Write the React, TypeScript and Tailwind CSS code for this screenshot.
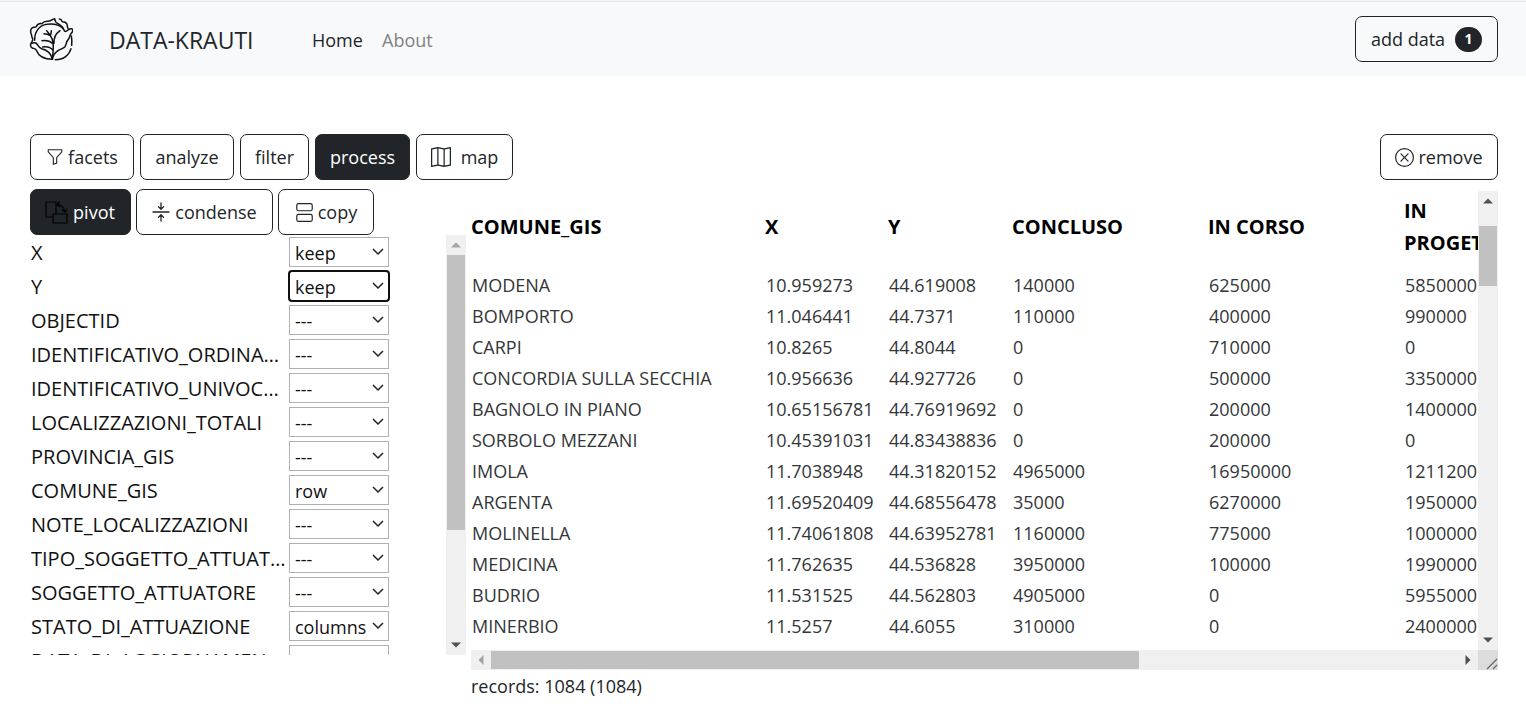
import React from "react";
import { BsFunnel, BsMap, BsXCircle, BsViewStacked } from "react-icons/bs";

const fields: [string, string][] = [
  ["X", "keep"],
  ["Y", "keep"],
  ["OBJECTID", "---"],
  ["IDENTIFICATIVO_ORDINANZA", "---"],
  ["IDENTIFICATIVO_UNIVOCO_ID", "---"],
  ["LOCALIZZAZIONI_TOTALI", "---"],
  ["PROVINCIA_GIS", "---"],
  ["COMUNE_GIS", "row"],
  ["NOTE_LOCALIZZAZIONI", "---"],
  ["TIPO_SOGGETTO_ATTUATORE", "---"],
  ["SOGGETTO_ATTUATORE", "---"],
  ["STATO_DI_ATTUAZIONE", "columns"],
  ["DATA_DI_AGGIORNAMENTO", "---"],
];

const columns = ["COMUNE_GIS", "X", "Y", "CONCLUSO", "IN CORSO", "IN PROGETTO"];

const rows = [
  ["MODENA", "10.959273", "44.619008", "140000", "625000", "5850000"],
  ["BOMPORTO", "11.046441", "44.7371", "110000", "400000", "990000"],
  ["CARPI", "10.8265", "44.8044", "0", "710000", "0"],
  ["CONCORDIA SULLA SECCHIA", "10.956636", "44.927726", "0", "500000", "3350000"],
  ["BAGNOLO IN PIANO", "10.65156781", "44.76919692", "0", "200000", "1400000"],
  ["SORBOLO MEZZANI", "10.45391031", "44.83438836", "0", "200000", "0"],
  ["IMOLA", "11.7038948", "44.31820152", "4965000", "16950000", "1211200"],
  ["ARGENTA", "11.69520409", "44.68556478", "35000", "6270000", "1950000"],
  ["MOLINELLA", "11.74061808", "44.63952781", "1160000", "775000", "1000000"],
  ["MEDICINA", "11.762635", "44.536828", "3950000", "100000", "1990000"],
  ["BUDRIO", "11.531525", "44.562803", "4905000", "0", "5955000"],
  ["MINERBIO", "11.5257", "44.6055", "310000", "0", "2400000"],
];

function Btn({ children, active = false, className = "" }: { children: React.ReactNode; active?: boolean; className?: string }) {
  const tone = active ? "bg-[#212529] text-white" : "text-[#212529]";
  return (
    <button
      type="button"
      className={`flex h-[46px] items-center justify-center gap-1 rounded-[7px] border border-[#212529] text-lg whitespace-nowrap ${tone} ${className}`}
    >
      {children}
    </button>
  );
}

function Logo() {
  return (
    <svg viewBox="87 51 132 132" className="size-11" fill="none" stroke="#111" strokeWidth="4.500" strokeLinecap="round" strokeLinejoin="round" role="img" aria-label="Cabbage">
      <path d="M164 57c-8 0-12 7-20 7-8-1-14 2-19 7-8-1-14 3-17 10-9 0-16 4-16 12-1 6 2 9 3 14 0 5 4 8 3 13l-4 10" />
      <path d="M104 121c-1-25 13-45 37-48 20-3 36 1 48 12" />
      <path d="M164 57c1 7 3 11 10 14 9 5 15 11 18 19 2 7 7 5 11 1 5-5 14-8 15 0 1 6-5 8-7 13-2 8-4 14-10 20" />
      <path d="M178 57c5 0 7 3 9 8 6 0 12 2 14 8 2 4 0 8 3 12" />
      <path d="M94 130c-4 4-3 11 3 14 5 2 9 1 12 7 6 16 22 27 48 27" />
      <path d="M94 130c6-2 13-3 17 2 4 6 5 11 14 14 16 4 29 14 32 32" />
      <path d="M214 108c2 9 2 18 1 28M213 146c-5 19-22 33-47 33" />
      <path d="M201 124c-3 6-2 10-6 16-5 6-13 7-21 12-10 7-16 16-17 26" />
      <path d="M157 178c3-22 6-46-1-62-4-9-9-17-16-24M132 101c7 0 13 2 19 6 2-5 3-9 3-15M126 122c11-2 23 0 33 9M128 141c12-2 24 1 31 10M162 130c-1-15 5-29 18-38" />
    </svg>
  );
}

function PivotIcon() {
  return (
    <svg viewBox="0 0 24 24" className="-ml-px size-6" fill="none" stroke="#000" strokeWidth="1.200" aria-hidden="true">
      <path d="M8 17H1V2h10v12M8 14h14v9H8z" />
      <path d="M12 4.500c4 0 7 2.500 8 7.500M14.500 2 12 4.500l3 2.500M17 9.500l3 2.500 2-3" />
    </svg>
  );
}

function CondenseIcon() {
  return (
    <svg viewBox="0 0 18 20" className="h-5 w-[18px]" fill="none" stroke="currentColor" strokeWidth="1.300" strokeLinecap="round" strokeLinejoin="round" aria-hidden="true">
      <path d="M1 10h16M9 1v6M6.500 4.800 9 7.200l2.500-2.400M9 19v-6M6.500 15.200 9 12.800l2.500 2.400" />
    </svg>
  );
}

export default function App() {
  return (
    <div className="min-h-screen bg-white font-['Open_Sans','Noto_Sans',sans-serif] text-[#212529]">
      <header className="border-t border-[#f4f4f4] bg-[#f8f9fa]">
        <nav className="flex h-[75px] items-center border-t border-[#e4e5e6] pr-7 pl-[29px]">
          <Logo />
          <a href="#" className="ml-9 w-[203px] pt-[3px] text-[23px]">DATA-KRAUTI</a>
          <a href="#" className="w-[70px] pt-px text-lg">Home</a>
          <a href="#" className="pt-px text-lg text-[#808284]">About</a>
          <Btn className="ml-auto w-[143px] gap-[10px]">
            add data
            <span className="flex h-[25px] w-[27px] items-center justify-center rounded-full bg-[#212529] text-sm font-bold text-white">1</span>
          </Btn>
        </nav>
      </header>

      <main className="pt-[58px] pr-7 pl-[30px]">
        <div className="flex items-center justify-between">
          <div className="flex gap-[6px]">
            <Btn className="w-[104px]"><BsFunnel className="size-[18px]" />facets</Btn>
            <Btn className="w-[94px]">analyze</Btn>
            <Btn className="w-[69px]">filter</Btn>
            <Btn active className="w-[95px]">process</Btn>
            <Btn className="w-[97px] gap-[10px]"><BsMap className="size-5" />map</Btn>
          </div>
          <Btn className="w-[118px]"><BsXCircle className="size-[19px]" />remove</Btn>
        </div>

        <div className="mt-[9px] flex gap-[5px]">
          <section className="w-[436px] shrink-0">
            <div className="flex gap-[5px]">
              <Btn active className="w-[101px]"><PivotIcon />pivot</Btn>
              <Btn className="w-[137px] gap-[5px]"><CondenseIcon />condense</Btn>
              <Btn className="w-[96px]"><BsViewStacked className="size-[19px]" />copy</Btn>
            </div>
            <div className="flex h-[420px]">
              <div className="flex-1 overflow-hidden pl-px">
                {fields.map(([name, value], i) => (
                  <div key={name} className="flex h-[34px] items-center">
                    <label htmlFor={`field-${i}`} className="w-[258px] truncate pt-px text-xl text-[#111]">{name}</label>
                    <div className="relative">
                      <select
                        id={`field-${i}`}
                        defaultValue={value}
                        className={`block h-[30px] w-[100px] appearance-none border border-[#b0b0b6] bg-white pt-px pl-[5px] text-lg leading-7 text-[#111] ${i === 1 ? "rounded-[3px] outline-2 -outline-offset-1 outline-[#101010]" : ""}`}
                      >
                        <option>---</option>
                        <option>keep</option>
                        <option>row</option>
                        <option>columns</option>
                      </select>
                      <svg viewBox="0 0 12 8" className="pointer-events-none absolute top-[11px] right-[5px] h-2 w-3" fill="none" stroke="#222" strokeWidth="1.500" aria-hidden="true">
                        <path d="M1 1l5 5 5-5" />
                      </svg>
                    </div>
                  </div>
                ))}
              </div>
              <VBar thumb="h-[275px]" offset="mt-0" muted />
            </div>
          </section>

          <section className="min-w-0 flex-1 pt-[2px]">
            <div className="flex h-[459px]">
              <div className="min-w-0 flex-1 overflow-hidden">
                <table className="w-[1057px] table-fixed text-left">
                  <colgroup>
                    <col className="w-[294px]" />
                    <col className="w-[123px]" />
                    <col className="w-[124px]" />
                    <col className="w-[196px]" />
                    <col className="w-[196px]" />
                    <col className="w-[124px]" />
                  </colgroup>
                  <thead>
                    <tr className="h-[79px] align-top">
                      {columns.map((c) => (
                        <th key={c} className="p-0 pt-1 text-xl leading-8 font-bold text-black">
                          <div className="flex h-16 items-center">{c}</div>
                        </th>
                      ))}
                    </tr>
                  </thead>
                  <tbody>
                    {rows.map((r) => (
                      <tr key={r[0]} className="h-[31px]">
                        {r.map((c, j) => (
                          <td key={j} className="p-0 pl-px text-lg leading-[31px] whitespace-nowrap text-[#333639]">{c}</td>
                        ))}
                      </tr>
                    ))}
                  </tbody>
                </table>
              </div>
              <VBar thumb="h-[60px]" offset="mt-[15px]" />
            </div>
            <div className="flex h-5 bg-[#f0f0f0]">
              <div className="flex flex-1 items-center">
                <Arrow className="mx-1 size-3 rotate-[-90deg] text-[#a3a3a3]" />
                <div className="h-[18px] w-[648px] bg-[#c1c1c1]" />
                <Arrow className="mr-1 ml-auto size-3 rotate-90 text-[#505050]" />
              </div>
              <div className="flex w-5 items-end justify-end bg-[#dcdcdc]">
                <svg viewBox="0 0 12 12" className="size-3" stroke="#666" strokeWidth="1.200" aria-hidden="true">
                  <path d="M1 11 11 1M7 11l4-4" />
                </svg>
              </div>
            </div>
            <p className="text-lg leading-8">records: 1084 (1084)</p>
          </section>
        </div>
      </main>
    </div>
  );
}

function Arrow({ className }: { className: string }) {
  return (
    <svg viewBox="0 0 12 12" className={className} fill="currentColor" aria-hidden="true">
      <path d="M1 8.500 6 3.500l5 5z" />
    </svg>
  );
}

function VBar({ thumb, offset, muted = false }: { thumb: string; offset: string; muted?: boolean }) {
  return (
    <div className="flex w-5 shrink-0 flex-col items-center bg-[#f0f0f0]">
      <Arrow className={`my-1 size-3 ${muted ? "text-[#a3a3a3]" : "text-[#505050]"}`} />
      <div className={`w-[18px] bg-[#c1c1c1] ${thumb} ${offset}`} />
      <Arrow className="mt-auto mb-1 size-3 rotate-180 text-[#505050]" />
    </div>
  );
}
